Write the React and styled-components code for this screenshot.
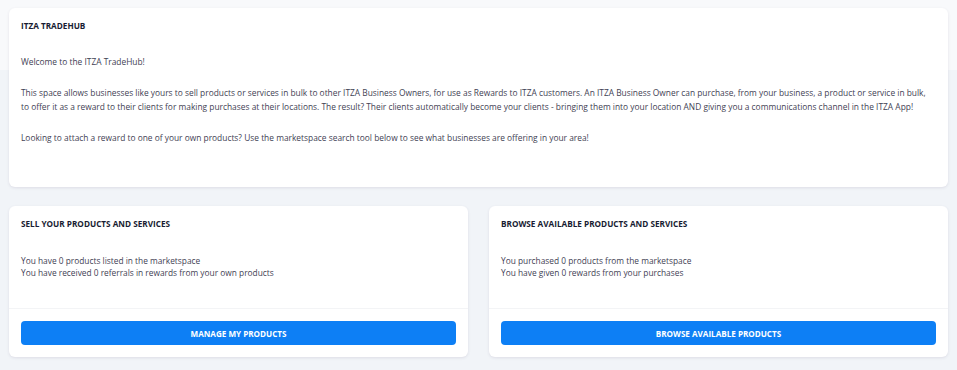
import React from 'react';
import styled, { createGlobalStyle } from 'styled-components';

const GlobalStyle = createGlobalStyle`
  html, body {
    margin: 0;
    padding: 0;
  }
  body {
    font-family: 'Open Sans', 'Noto Sans', sans-serif;
    background: linear-gradient(to bottom, #f8f9fb 0, #f8f9fb 70px, #f1f4f8 70px);
    min-height: 370px;
    color: #3f4254;
  }
`;

const Page = styled.div`
  display: flex;
  flex-direction: column;
  gap: 19px;
  padding: 8px 9px;
`;

const Card = styled.section`
  display: flex;
  flex-direction: column;
  background: #fff;
  border-radius: 6px;
  box-shadow: 0 1px 3px rgba(82, 63, 105, 0.12);
  min-height: ${(p) => p.minHeight || 0}px;
`;

const CardHeader = styled.div`
  padding: 11px 12px 0;
`;

const Title = styled.h2`
  margin: 0;
  font-size: 8.2px;
  line-height: 13px;
  font-weight: 700;
  color: #181c32;
  text-transform: uppercase;
`;

const CardBody = styled.div`
  flex: 1;
  padding: ${(p) => p.pad || '23px 20px 12px 12px'};
`;

const Text = styled.p`
  margin: 0 0 ${(p) => p.gap ?? 17}px;
  font-size: 8.4px;
  line-height: 14px;
  color: #3f4254;
`;

const Lines = styled.div`
  font-size: 8.35px;
  line-height: 12px;
  color: #3f4254;
`;

const CardFooter = styled.div`
  border-top: 1px solid #f3f4f6;
  padding: 12px;
`;

const Row = styled.div`
  display: grid;
  grid-template-columns: 1fr 1fr;
  gap: 21px;
`;

const Button = styled.button`
  display: block;
  width: 100%;
  height: 24px;
  border: none;
  border-radius: 4px;
  background: #0d7ff5;
  color: #fff;
  font-family: inherit;
  font-size: 8.1px;
  font-weight: 700;
  text-transform: uppercase;
  cursor: pointer;
`;

const StatCard = ({ title, lines, action }) => (
  <Card>
    <CardHeader>
      <Title>{title}</Title>
    </CardHeader>
    <CardBody pad="25px 12px 29px">
      <Lines>
        {lines.map((l) => (
          <div key={l}>{l}</div>
        ))}
      </Lines>
    </CardBody>
    <CardFooter>
      <Button>{action}</Button>
    </CardFooter>
  </Card>
);

export default function App() {
  return (
    <>
      <GlobalStyle />
      <Page>
        <Card minHeight={179}>
          <CardHeader>
            <Title>ITZA TradeHub</Title>
          </CardHeader>
          <CardBody>
            <Text>Welcome to the ITZA TradeHub!</Text>
            <Text>
              This space allows businesses like yours to sell products or services in bulk to other ITZA Business
              Owners, for use as Rewards to ITZA customers. An ITZA Business Owner can purchase, from your business, a
              product or service in bulk, to offer it as a reward to their clients for making purchases at their
              locations. The result? Their clients automatically become your clients - bringing them into your location
              AND giving you a communications channel in the ITZA App!
            </Text>
            <Text gap={0}>
              Looking to attach a reward to one of your own products? Use the marketspace search tool below to see what
              businesses are offering in your area!
            </Text>
          </CardBody>
        </Card>
        <Row>
          <StatCard
            title="Sell your products and services"
            lines={[
              'You have 0 products listed in the marketspace',
              'You have received 0 referrals in rewards from your own products',
            ]}
            action="Manage my products"
          />
          <StatCard
            title="Browse available products and services"
            lines={['You purchased 0 products from the marketspace', 'You have given 0 rewards from your purchases']}
            action="Browse available products"
          />
        </Row>
      </Page>
    </>
  );
}
